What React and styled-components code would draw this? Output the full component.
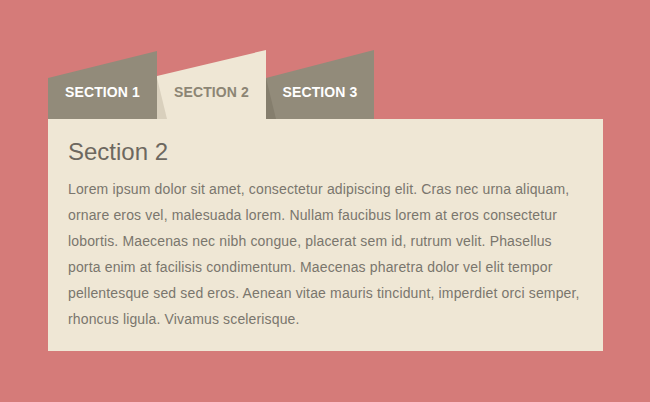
import React, { useState } from "react";
import styled, { createGlobalStyle } from "styled-components";

const Global = createGlobalStyle`
  html, body { margin: 0; padding: 0; }
  body {
    background: #d57b79;
    font-family: "Liberation Sans", Arial, sans-serif;
    width: 650px;
    height: 402px;
    overflow: hidden;
  }
`;

const Wrapper = styled.div`
  padding: 50px 0 0 48px;
  width: 555px;
`;

const TabBar = styled.div`
  display: flex;
  height: 69px;
`;

const Tab = styled.button`
  position: relative;
  width: ${(p) => p.$w}px;
  height: 69px;
  border: 0;
  margin: 0;
  padding: 0 0 19px;
  display: flex;
  align-items: flex-end;
  justify-content: center;
  background: ${(p) => (p.$active ? "#efe7d5" : "#928b7a")};
  color: ${(p) => (p.$active ? "#8c8574" : "#ffffff")};
  font-family: "Liberation Sans", Arial, sans-serif;
  font-weight: bold;
  font-size: 14px;
  line-height: 16px;
  letter-spacing: 0.1px;
  text-transform: uppercase;
  cursor: pointer;
  clip-path: polygon(0 ${(p) => p.$tl}px, 100% ${(p) => p.$tr}px, 100% 100%, 0 100%);

  &::before {
    content: "";
    display: ${(p) => (p.$shadow ? "block" : "none")};
    position: absolute;
    left: 0;
    top: 0;
    width: 10px;
    height: 69px;
    background: ${(p) => (p.$active ? "#d9d0bd" : "#857e6d")};
    clip-path: polygon(0 28px, 100% 100%, 0 100%);
  }
`;

const Label = styled.span`
  position: relative;
`;

const Panel = styled.div`
  background: #efe7d5;
  padding: 19px 20px 19px;
`;

const Title = styled.h2`
  margin: 0;
  font-size: 24px;
  line-height: 28px;
  font-weight: normal;
  color: #6d685f;
`;

const Text = styled.p`
  margin: 10px 0 0;
  font-size: 14px;
  line-height: 26px;
  letter-spacing: 0.15px;
  color: #7a766d;
`;

const tabs = [
  { label: "Section 1", w: 109, tl: 28, tr: 1 },
  { label: "Section 2", w: 109, tl: 26, tr: 0 },
  { label: "Section 3", w: 108, tl: 28, tr: 0 },
];

const lorem =
  "Lorem ipsum dolor sit amet, consectetur adipiscing elit. Cras nec urna aliquam, ornare eros vel, malesuada lorem. Nullam faucibus lorem at eros consectetur lobortis. Maecenas nec nibh congue, placerat sem id, rutrum velit. Phasellus porta enim at facilisis condimentum. Maecenas pharetra dolor vel elit tempor pellentesque sed sed eros. Aenean vitae mauris tincidunt, imperdiet orci semper, rhoncus ligula. Vivamus scelerisque.";

export default function App() {
  const [active, setActive] = useState(1);
  return (
    <>
      <Global />
      <Wrapper>
        <TabBar>
          {tabs.map((t, i) => (
            <Tab
              key={t.label}
              $w={t.w}
              $tl={t.tl}
              $tr={t.tr}
              $active={i === active}
              $shadow={i > 0}
              onClick={() => setActive(i)}
            >
              <Label>{t.label}</Label>
            </Tab>
          ))}
        </TabBar>
        <Panel>
          <Title>{tabs[active].label}</Title>
          <Text>{lorem}</Text>
        </Panel>
      </Wrapper>
    </>
  );
}
